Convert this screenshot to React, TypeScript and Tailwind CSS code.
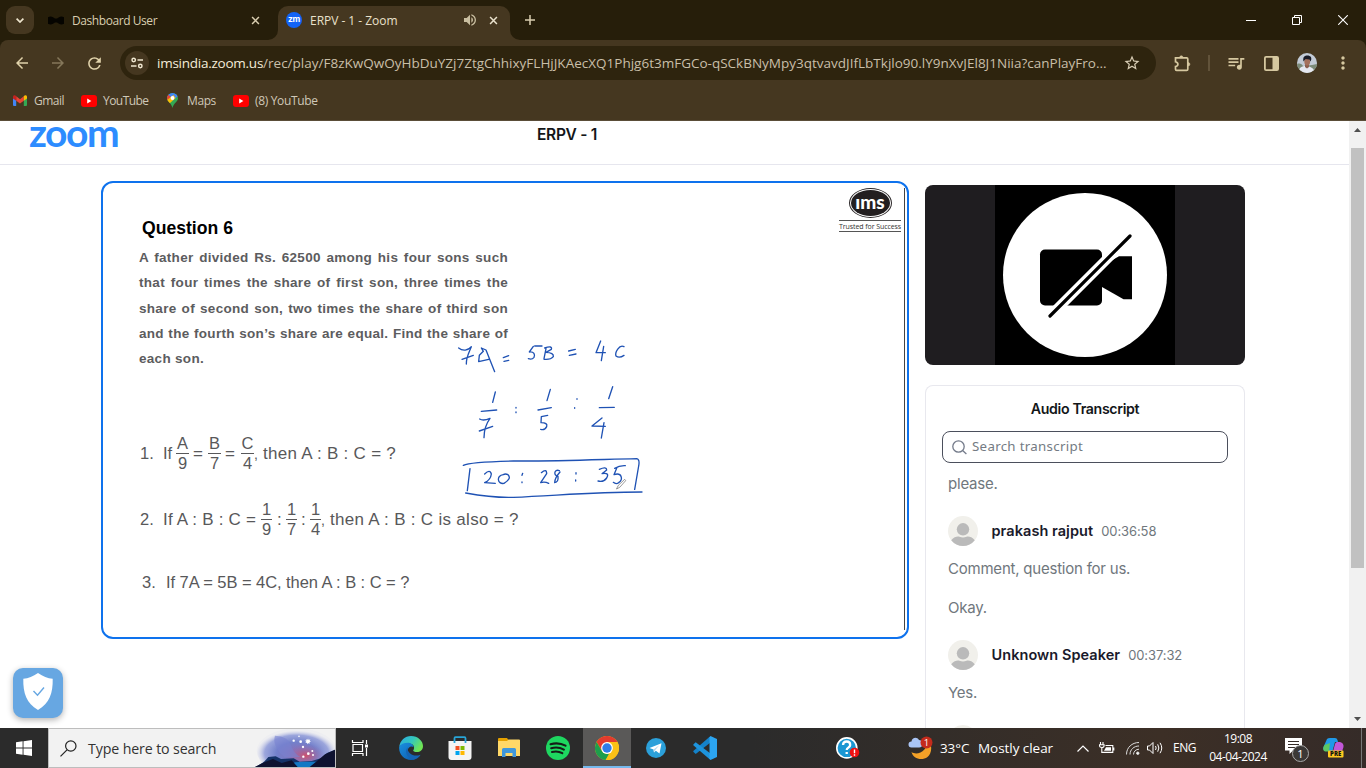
import React from "react";
import type { ReactNode } from "react";
import {
  MdArrowBack,
  MdArrowForward,
  MdMoreVert,
  MdQueueMusic,
  MdRefresh,
  MdStarBorder,
  MdVolumeUp,
} from "react-icons/md";

const segoe = "font-['Open_Sans','Noto_Sans',sans-serif]";
const arial = "font-['Liberation_Sans',Arial,sans-serif]";

function CloseIcon({ className }: { className: string }) {
  return (
    <svg viewBox="0 0 10 10" className={className} fill="none" stroke="currentColor" strokeWidth="1.7">
      <path d="M1.2 1.2 8.8 8.8M8.8 1.2 1.2 8.8" />
    </svg>
  );
}

function YouTubeIcon() {
  return (
    <svg viewBox="0 0 16 12" className="h-3 w-4 shrink-0">
      <rect width="16" height="12" rx="3" fill="#ff0000" />
      <path d="M6.200 3.600v4.800L10.400 6z" fill="#fff" />
    </svg>
  );
}

function TabStrip() {
  return (
    <div className={`flex h-10 items-start bg-[#261e0a] ${segoe}`}>
      <div className="mt-1.5 ml-1.5 flex h-7 w-7 shrink-0 items-center justify-center rounded-[9px] bg-[#453720]">
        <svg viewBox="0 0 8 5" className="h-[5px] w-2" fill="none" stroke="#efe6cf" strokeWidth="1.7">
          <path d="M.6.6 4 4 7.4.6" />
        </svg>
      </div>
      <div className="flex h-10 w-[244px] shrink-0 items-center pl-[14px] text-[#d9ceb0]">
        <svg viewBox="0 0 16 9" className="h-[9px] w-4 shrink-0" fill="#050400">
          <path d="M0 1.200C1.600.2 3.600.2 5 1.200L7 2.400h2l2-1.200C12.400.2 14.400.2 16 1.200v6.600c-1.600 1-3.600.9-5 0L9 6.600H7L5 7.800c-1.400 1-3.400 1-5 0z" />
        </svg>
        <span className="mt-px ml-2 grow whitespace-nowrap text-[12px] tracking-[-0.430px]">Dashboard User</span>
        <CloseIcon className="mr-[18px] size-[9px]" />
      </div>
      <div className="relative mt-1.5 flex h-[34px] w-[232px] shrink-0 items-start rounded-t-[10px] bg-[#453720] text-[#e9e1cc]">
        <svg viewBox="0 0 10 10" className="absolute bottom-0 -left-2.5 size-2.5" fill="#453720">
          <path d="M10 0v10H0A10 10 0 0 0 10 0z" />
        </svg>
        <svg viewBox="0 0 10 10" className="absolute -right-2.5 bottom-0 size-2.5" fill="#453720">
          <path d="M0 0v10h10A10 10 0 0 1 0 0z" />
        </svg>
        <div className="flex h-7 w-full items-center pl-2">
          <div className="flex size-4 shrink-0 items-center justify-center rounded-full bg-[#1263f5]">
            <span className="mb-[2px] font-['Inter',sans-serif] text-[8.5px] leading-none font-bold tracking-[-0.3px] text-white">zm</span>
          </div>
          <span className="mt-px ml-2 grow whitespace-nowrap text-[12px] tracking-[-0.030px]">ERPV - 1 - Zoom</span>
          <MdVolumeUp className="mr-[11px] size-4 text-[#c9bea0]" />
          <CloseIcon className="mr-[12px] size-[9px]" />
        </div>
      </div>
      <svg viewBox="0 0 10 10" className="mt-[15px] ml-[15px] size-2.5" stroke="#d9ceb0" strokeWidth="1.5">
        <path d="M5 0v10M0 5h10" />
      </svg>
      <div className="mt-[15px] mr-[18px] ml-auto flex items-center gap-[36px]">
        <svg viewBox="0 0 10 10" className="size-2.5" stroke="#fff">
          <path d="M0 5.500h10" />
        </svg>
        <svg viewBox="0 0 10 10" className="size-2.5" fill="none" stroke="#fff">
          <path d="M.5 2.500h7v7h-7zM2.500 2.500v-2h7v7h-2" />
        </svg>
        <svg viewBox="0 0 10 10" className="size-2.5" fill="none" stroke="#fff" strokeWidth="1.1">
          <path d="M.2.2 9.800 9.800M9.800.2.2 9.800" />
        </svg>
      </div>
    </div>
  );
}

function Toolbar() {
  return (
    <div className={`flex h-[46px] items-center bg-[#453720] text-[#d6c8a0] ${segoe}`}>
      <MdArrowBack className="ml-[13px] size-[18px] shrink-0 text-[#e0d2aa]" />
      <MdArrowForward className="ml-[18px] size-[18px] shrink-0 text-[#85775a]" />
      <MdRefresh className="ml-[18px] size-[19px] shrink-0 text-[#e0d2aa]" />
      <div className="ml-4 flex h-[34px] w-[1036px] shrink-0 items-center rounded-full bg-[#2e240e] pl-[5px]">
        <div className="flex size-6 shrink-0 items-center justify-center rounded-full bg-[#453720]">
          <svg viewBox="0 0 12 12" className="size-3" fill="none" stroke="#efe7d0" strokeWidth="1.5">
            <circle cx="2.700" cy="3" r="1.700" />
            <path d="M6.500 3H12M0 9h5.500" />
            <circle cx="9.300" cy="9" r="1.700" />
          </svg>
        </div>
        <span className="ml-2 w-[966px] shrink-0 whitespace-nowrap text-[13.500px] tracking-[0.003px] text-[#c9bfa9]">
          <span className="tracking-[-0.250px] text-[#f4ecd9]">imsindia.zoom.us</span>
          /rec/play/F8zKwQwOyHbDuYZj7ZtgChhixyFLHjJKAecXQ1Phjg6t3mFGCo-qSCkBNyMpy3qtvavdJIfLbTkjlo90.lY9nXvJEl8J1Niia?canPlayFro...
        </span>
        <MdStarBorder className="size-[18px] shrink-0 text-[#d8cdb4]" />
      </div>
      <svg viewBox="0 0 17 17" className="ml-[18px] size-[17px] shrink-0" fill="none" stroke="currentColor" strokeWidth="1.700">
        <path d="M1.500 2.900h11.200q1.100 0 1.100 1.100v10.300q0 1.100-1.100 1.100H2.600q-1.100 0-1.100-1.100V11.500c1.600-.3 2.400-1 2.400-2.300S3 7.200 1.500 6.800z" />
        <path d="M5.600 2.700a1.700 1.900 0 0 1 3.400 0zM14 7.500a1.900 1.700 0 0 1 0 3.400z" fill="currentColor" strokeWidth=".6" />
      </svg>
      <div className="ml-[17px] h-4 w-[2px] shrink-0 bg-[#62533a]" />
      <MdQueueMusic className="ml-[16px] size-[20px] shrink-0" />
      <svg viewBox="0 0 15 15" className="ml-[18px] size-[15px] shrink-0">
        <rect x=".9" y=".9" width="13.200" height="13.200" rx="1.200" fill="none" stroke="currentColor" strokeWidth="1.800" />
        <path d="M8.500 1H14v13H8.500z" fill="currentColor" />
      </svg>
      <svg viewBox="0 0 20 20" className="ml-[18px] size-5 shrink-0">
        <clipPath id="avatar">
          <circle cx="10" cy="10" r="10" />
        </clipPath>
        <g clipPath="url(#avatar)">
          <rect width="20" height="20" fill="#c3cbd6" />
          <path d="M0 11c3-1 5 0 6 2l9-1 5-1v9H0z" fill="#7c8b78" />
          <path d="M1 20c1-6 4-7 8-7s8 2 9 7z" fill="#e6e8f0" />
          <path d="M8 10h4v4l-2 1.500L8 14z" fill="#8c5e4d" />
          <ellipse cx="10.200" cy="8.500" rx="2.900" ry="4" fill="#a4705c" />
          <path d="M6.500 8.500c-1-4.500 1.200-6 4-6s5 2 3.200 6L12.500 6.500 8.500 6z" fill="#191b26" />
        </g>
      </svg>
      <MdMoreVert className="ml-[16px] size-5 shrink-0" />
    </div>
  );
}

function Bookmarks() {
  return (
    <div className={`flex h-[35px] items-center border-b border-[#5a4d38] bg-[#453720] pb-[5px] pl-[13px] text-[12px] text-[#d0c8b8] ${segoe}`}>
      <svg viewBox="0 0 14 11" className="h-[11px] w-3.5">
        <path d="M0 2v8q0 1 1 1h2.200V4.500z" fill="#4285f4" />
        <path d="M14 2v8q0 1-1 1h-2.200V4.500z" fill="#34a853" />
        <path d="M3.200 1.300v4.500L7 8.600l3.800-2.800V1.300L7 4.200z" fill="#ea4335" />
        <path d="M0 1.700C0 .2 1.700-.4 3.200.9v4.900L0 3.500z" fill="#c5221f" />
        <path d="M14 1.700C14 .2 12.300-.4 10.800.9v4.900L14 3.500z" fill="#fbbc04" />
      </svg>
      <span className="ml-[7px] w-[47px] tracking-[-0.5px]">Gmail</span>
      <YouTubeIcon />
      <span className="ml-[6px] w-[64px] tracking-[-0.550px]">YouTube</span>
      <svg viewBox="0 0 11 15" className="h-[15px] w-[11px]">
        <clipPath id="pin">
          <path d="M5.500 0A5.500 5.200 0 0 1 11 5.200c0 3.500-4.300 4.300-5.500 9.800C4.300 9.500 0 8.700 0 5.200A5.500 5.200 0 0 1 5.500 0z" />
        </clipPath>
        <g clipPath="url(#pin)">
          <rect width="11" height="15" fill="#34a853" />
          <path d="M0 0h11v3L5.500 8 0 3z" fill="#4285f4" />
          <path d="M-1 8V0l5 4z" fill="#ea4335" />
          <path d="M0 9V7l6.500-5 2 3L2 11z" fill="#fbbc04" />
        </g>
        <circle cx="5.500" cy="5" r="1.900" fill="#fff" />
      </svg>
      <span className="ml-[9px] w-[46px] tracking-[-0.4px]">Maps</span>
      <YouTubeIcon />
      <span className="ml-[6px] tracking-[-0.350px]">(8) YouTube</span>
    </div>
  );
}

function Fraction({ top, bottom, width }: { top: string; bottom: string; width: string }) {
  return (
    <div className={`flex shrink-0 flex-col items-center text-[16.500px] leading-[18px] ${width}`}>
      <span className="h-[19px]">{top}</span>
      <span className="h-px w-full bg-[#58585a]" />
      <span className="h-[18px]">{bottom}</span>
    </div>
  );
}

function Handwriting() {
  return (
    <svg
      viewBox="0 0 720 570"
      className="absolute top-[137px] left-[337px] h-[190px] w-[240px]"
      fill="none"
      stroke="#1f52b4"
      strokeWidth="4"
      strokeLinecap="round"
      strokeLinejoin="round"
    >
      <path d="M56 84C68 94 84 92 94 80C88 96 78 112 79 132M66 118L100 106M124 84L130 94L118 106L116 125L146 118M124 84L138 90L164 155M190 113L206 107M192 124L206 121" />
      <path d="M284 78H306M280 79L268 96C282 94 286 104 282 112Q276 120 265 116M318 86L312 116M314 84Q338 76 334 88L318 97Q342 98 340 110Q332 120 312 118M386 93L406 88M388 106L408 102" />
      <path d="M482 63L468 98H496M491 79L484 122M552 80C538 72 524 98 528 108Q538 116 552 106" />
      <path d="M166 216L158 247M124 274L170 270M119 297Q130 304 150 295Q132 320 132 353M118 333L158 319" />
      <path d="M228 262v2M228 276v2M331 208L321 242M294 270L334 263M304 290L323 286M304 290L303 308Q324 308 320 320Q314 332 302 328" />
      <path d="M411 236v2M404 263v2M518 200L506 236M478 263L523 262M486 294L456 318L496 319M492 308L484 354" />
      <path d="M70 436Q90 426 220 423C360 424 490 418 590 416Q600 418 596 438L584 508M90 446L82 512M77 519Q160 534 220 532C360 526 460 516 606 516" />
      <path d="M134 462Q150 446 154 462Q152 480 134 488L166 490M190 464C168 466 172 494 192 490Q216 476 204 464Q196 460 190 464M248 460L246 466M246 486v2" />
      <path d="M304 458Q320 444 320 461L302 488Q314 484 326 490M358 452C342 446 340 466 354 469Q356 486 344 488Q344 474 360 456M408 458v4M407 480v3" />
      <path d="M478 448Q500 438 500 450L486 461Q510 456 500 474Q490 488 474 483M524 445Q538 436 556 437M530 445L522 464C546 456 550 478 536 488Q528 494 520 487" />
      <path d="M530 506L535 496L554 478L557 482L540 501Z" stroke="#666" strokeWidth="2" fill="#fff" />
    </svg>
  );
}

function Slide() {
  return (
    <div className={`relative mt-4 ml-[101px] flex h-[458px] w-[808px] shrink-0 justify-between rounded-xl border-2 border-[#0e72ed] bg-white ${arial}`}>
      <div className="flex w-[500px] flex-col pl-9 text-[#58585a]">
        <h2 className="mt-[35px] ml-[3px] text-[17.600px] leading-5 font-bold text-black">Question 6</h2>
        <div className="mt-[7px] w-[369px] text-[13.500px] leading-[25.300px] font-bold tracking-[0.300px] text-[#5c5c5e]">
          <p className="[text-align-last:justify] whitespace-nowrap">A father divided Rs. 62500 among his four sons such</p>
          <p className="[text-align-last:justify] whitespace-nowrap">that four times the share of first son, three times the</p>
          <p className="[text-align-last:justify] whitespace-nowrap">share of second son, two times the share of third son</p>
          <p className="[text-align-last:justify] whitespace-nowrap">and the fourth son’s share are equal. Find the share of</p>
          <p>each son.</p>
        </div>
        <div className="mt-[63px] ml-px flex h-[38px] items-center whitespace-nowrap text-[17px]">
          <span className="w-[23px] text-[16.500px]">1.</span>
          <span className="w-[13px] text-[16.500px]">If</span>
          <Fraction top="A" bottom="9" width="w-[13px]" />
          <span className="w-[19px] pl-[4px]">=</span>
          <Fraction top="B" bottom="7" width="w-[13px]" />
          <span className="w-[20px] pl-[4px]">=</span>
          <Fraction top="C" bottom="4" width="w-[13px]" />
          <span className="mt-[3px] w-[9px] text-[14px]">,</span>
          <span className="tracking-[0.280px]">then A : B : C = ?</span>
        </div>
        <div className="mt-[28px] ml-px flex h-[38px] items-center whitespace-nowrap text-[17px]">
          <span className="w-[23px] text-[16.500px]">2.</span>
          <span className="w-[98px] tracking-[0.200px]">If A : B : C =</span>
          <Fraction top="1" bottom="9" width="w-[11px]" />
          <span className="w-[14px] pl-[5px]">:</span>
          <Fraction top="1" bottom="7" width="w-[11px]" />
          <span className="w-[13px] pl-[4px]">:</span>
          <Fraction top="1" bottom="4" width="w-[11px]" />
          <span className="mt-[3px] w-[9px] text-[14px]">,</span>
          <span className="tracking-[0.300px]">then A : B : C is also = ?</span>
        </div>
        <div className="mt-[32px] ml-[3px] flex whitespace-nowrap text-[16.500px] leading-6">
          <span className="w-[24px]">3.</span>
          <span className="tracking-[-0.060px]">If 7A = 5B = 4C, then A : B : C = ?</span>
        </div>
      </div>
      <div className="mt-[5px] mr-[2px] flex h-[442px] w-[66px] border-r border-[#444]">
        <div className="flex w-[62px] flex-col items-center">
          <div className="flex h-[30px] w-[43px] items-center justify-center rounded-[50%] border border-[#2b2728] p-px">
            <div className="flex h-full w-full items-center justify-center rounded-[50%] bg-[#231f20]">
              <span className="mb-[3px] font-['Lato',sans-serif] text-[19px] leading-none font-black text-white">ıms</span>
            </div>
          </div>
          <div className="mt-[2px] flex h-[12px] w-full items-center justify-center border-y border-[#555]">
            <span className="font-['Open_Sans',sans-serif] text-[7px] leading-none tracking-[-0.070px] whitespace-nowrap text-[#333]">Trusted for Success</span>
          </div>
        </div>
      </div>
      <Handwriting />
    </div>
  );
}

function Avatar() {
  return (
    <svg viewBox="0 0 30 30" className="size-[30px] shrink-0">
      <circle cx="15" cy="15" r="15" fill="#f1f0eb" />
      <circle cx="15" cy="13.300" r="6.200" fill="#bababa" />
      <path d="M3.200 24.200C6.200 20.300 10 20 11.500 20.700c2.200 1 4.800 1 7 0 1.500-.7 5.300-.4 8.300 3.500A15 15 0 0 1 3.200 24.200z" fill="#bababa" />
    </svg>
  );
}

function Speaker({ name, time }: { name: string; time: string }) {
  return (
    <div className="mt-[22px] flex items-center">
      <Avatar />
      <b className="ml-[13.500px] text-[14.500px] font-semibold tracking-[0.060px] text-[#1a1a2b]">{name}</b>
      <span className="ml-2 text-[13px] tracking-[-0.100px]">{time}</span>
    </div>
  );
}

function Sidebar() {
  return (
    <div className="ml-4 flex w-80 shrink-0 flex-col pt-5 font-['Inter',sans-serif]">
      <div className="flex h-[180px] shrink-0 justify-center overflow-hidden rounded-lg bg-[#1f1d20]">
        <div className="flex w-[180px] items-center justify-center bg-black">
          <svg viewBox="0 0 164 164" className="size-[164px]">
            <circle cx="82" cy="82" r="82" fill="#fff" />
            <rect x="37" y="56.500" width="62" height="56" rx="5" fill="#000" />
            <path d="M99 73 116 63.300h13v43h-8.500L99 94z" fill="#000" />
            <path d="M42 128 132 38" stroke="#fff" strokeWidth="10" />
            <path d="M47 123 127 43" stroke="#000" strokeWidth="3.200" strokeLinecap="round" />
          </svg>
        </div>
      </div>
      <div className="mt-5 flex grow flex-col rounded-t-lg border border-b-0 border-[#e8e8ee] px-4">
        <h3 className="mt-[13px] text-center text-[14.200px] leading-5 font-semibold tracking-[-0.350px] text-[#131619]">Audio Transcript</h3>
        <div className="mt-3 flex h-8 shrink-0 items-center rounded-lg border border-[#4b4f5c] pl-[9px]">
          <svg viewBox="0 0 15 15" className="size-[15px]" fill="none" stroke="#747b8a" strokeWidth="1.300">
            <circle cx="6.500" cy="6.500" r="5.700" />
            <path d="m10.600 10.600 3.800 3.400" />
          </svg>
          <span className="ml-[5px] font-['Noto_Sans',sans-serif] text-[13.300px] tracking-[0.300px] text-[#747b83]">Search transcript</span>
        </div>
        <div className="ml-[6px] flex flex-col text-[15px] leading-5 tracking-[-0.220px] text-[#70777d]">
          <p className="mt-[11px]">please.</p>
          <Speaker name="prakash rajput" time="00:36:58" />
          <p className="mt-[13px]">Comment, question for us.</p>
          <p className="mt-[19px]">Okay.</p>
          <Speaker name="Unknown Speaker" time="00:37:32" />
          <p className="mt-[13px]">Yes.</p>
          <div className="mt-[22px]">
            <Avatar />
          </div>
        </div>
      </div>
    </div>
  );
}

function Page() {
  return (
    <div className="flex h-[607px] shrink-0 bg-white">
      <div className="relative flex w-[1349px] flex-col">
        <div className="flex h-11 shrink-0 items-start border-b border-[#e6e6ee] font-['Inter',sans-serif]">
          <span className="mt-[-7px] ml-[29px] h-9 w-[508px] font-['Lato',sans-serif] text-[39px] leading-9 font-bold tracking-[-1.500px] text-[#2d8cff]">zoom</span>
          <span className="mt-[4px] text-[15.500px] leading-5 font-semibold tracking-[-0.300px] text-[#131619]">ERPV - 1</span>
        </div>
        <div className="flex h-[563px] items-stretch overflow-hidden">
          <Slide />
          <Sidebar />
        </div>
        <div className="absolute top-[547px] left-[13px] flex size-[50px] justify-center rounded-[10px] bg-[#67a7e2] pt-[5px] shadow-[0_2px_6px_rgba(0,0,0,0.3)]">
          <svg viewBox="0 0 30 37" className="h-[37px] w-[30px]">
            <path d="M15 0C20 3.600 24.500 5.300 29.700 5.800 30 20 26.500 30.500 15 37 3.500 30.500 0 20 .3 5.800 5.500 5.300 10 3.600 15 0z" fill="#fff" />
            <path d="m10.500 18 4 4.300 6.500-7.800" fill="none" stroke="#67a7e2" strokeWidth="1.400" />
          </svg>
        </div>
      </div>
      <div className="flex w-[17px] flex-col items-center justify-between bg-[#f1f1f1] pt-[7px] pb-[7px]">
        <svg viewBox="0 0 7 4" className="h-1 w-[7px]">
          <path d="M3.500 0 7 4H0z" fill="#505050" />
        </svg>
        <div className="mt-4 mb-auto h-[420px] w-[13px] bg-[#c1c1c1]" />
        <svg viewBox="0 0 7 4" className="h-1 w-[7px]">
          <path d="M3.500 4 0 0h7z" fill="#505050" />
        </svg>
      </div>
    </div>
  );
}

function TaskIcon({ children, active = false }: { children: ReactNode; active?: boolean }) {
  return (
    <div className={`flex h-10 shrink-0 items-center justify-center ${active ? "ml-px w-12 border-b-2 border-[#76b9ed] bg-[#5a5958] pt-[2px]" : "w-[49px]"}`}>
      {children}
    </div>
  );
}

function SearchArt() {
  return (
    <svg viewBox="0 0 240 114" className="h-[38px] w-20 shrink-0">
      <defs>
        <radialGradient id="sky" cx=".5" cy=".55" r=".5">
          <stop offset="0" stopColor="#8d6fb5" />
          <stop offset=".5" stopColor="#7280cb" />
          <stop offset=".8" stopColor="#8c98d8" stopOpacity=".85" />
          <stop offset="1" stopColor="#c5c9e8" stopOpacity=".1" />
        </radialGradient>
        <radialGradient id="glow">
          <stop offset="0" stopColor="#d0506a" />
          <stop offset="1" stopColor="#8d6fb5" stopOpacity="0" />
        </radialGradient>
      </defs>
      <ellipse cx="125" cy="66" rx="120" ry="68" fill="url(#sky)" />
      <ellipse cx="152" cy="80" rx="58" ry="36" fill="url(#glow)" />
      <path d="M60 20Q100 22 108 48T136 84L88 84Q50 50 60 20z" fill="#7882d1" opacity=".6" />
      <path d="M0 114C18 104 28 100 40 84L62 82 78 90 116 88 134 98 170 96 202 86 216 72 240 62V114z" fill="#153268" />
      <path d="M90 114 120 100 150 98 174 98 190 98 172 114z" fill="#1378c4" />
      <path d="M0 114 28 100 54 90 80 102 110 94 128 114zM164 114 186 96 210 76 240 62V114z" fill="#0e1230" />
      <g fill="#fff">
        <circle cx="132" cy="22" r="2.500" />
        <circle cx="116" cy="35" r="3.500" />
        <circle cx="137" cy="38" r="4" />
        <path d="m159 28 2 5 5-2-2 5 4 2-5 2 2 4-4-2-3 4-2-5-5 1 3-4-4-3 5-1-1-4 4 2z" />
        <circle cx="144" cy="54" r="3.500" />
        <circle cx="172" cy="66" r="3" />
        <circle cx="160" cy="74" r="4" />
        <circle cx="174" cy="78" r="3" />
        <circle cx="145" cy="83" r="3.500" />
      </g>
    </svg>
  );
}

function Taskbar() {
  return (
    <div className={`flex h-10 shrink-0 items-center bg-linear-to-r from-[#2b2b2b] from-55% via-[#3c2f26] via-85% to-[#352b28] text-white ${segoe}`}>
      <div className="flex w-12 shrink-0 justify-center">
        <svg viewBox="0 0 16 16" className="size-4" fill="#fff">
          <path d="M0 2.200 6.600 1.300V7.600H0zM7.500 1.200 16 0V7.600H7.500zM0 8.400H6.600V14.700L0 13.800zM7.500 8.400H16V16L7.500 14.800z" />
        </svg>
      </div>
      <div className="flex h-10 w-72 shrink-0 items-center border border-[#bdbdbd] bg-[#f2f2f2] pl-[11px]">
        <svg viewBox="0 0 17 17" className="size-[17px]" fill="none" stroke="#222" strokeWidth="1.200">
          <circle cx="10.800" cy="6" r="5.200" />
          <path d="m7 9.800-6.500 6.500" />
        </svg>
        <span className="mt-px ml-[11px] grow whitespace-nowrap text-[14.200px] tracking-[-0.120px] text-[#333]">Type here to search</span>
        <SearchArt />
      </div>
      <TaskIcon>
        <svg viewBox="0 0 18 18" className="mr-[2px] size-[18px]" fill="none" stroke="#fff" strokeWidth="1.200">
          <path d="M1.500 1v2.500h10.500V1M1.500 17v-2.500h10.500V17M2 5.500h9.500v7H2zM15.500 1v4M15.500 9v8" />
          <path d="M14 5.500h3v3h-3z" fill="#fff" stroke="none" />
        </svg>
      </TaskIcon>
      <div className="w-px shrink-0" />
      <TaskIcon>
        <svg viewBox="0 0 24 24" className="size-6">
          <defs>
            <linearGradient id="edgeTop" x1="0" y1="0" x2="1" y2=".5">
              <stop offset="0" stopColor="#2aa9e8" />
              <stop offset=".55" stopColor="#34c7bc" />
              <stop offset="1" stopColor="#6fe454" />
            </linearGradient>
            <linearGradient id="edgeLow" x1="0" y1="0" x2="1" y2="1">
              <stop offset="0" stopColor="#1a8fe0" />
              <stop offset="1" stopColor="#0c58aa" />
            </linearGradient>
          </defs>
          <path d="M.2 11C1 4.500 6 0 12 0c7 0 12 5 12 10 0 4-3 6-6 6-2.500 0-4-.7-3.800-1.500 2-2.500.8-7-4.200-7C5.500 7.500 1 9.500.2 11z" fill="url(#edgeTop)" />
          <path d="M.2 11C1.500 8 5 6.700 8.500 6.700c3.500 0 6 2 6 4.600-2-2-6 0-6 4 0 5 6 7.500 12.500 4C18.500 22.500 15.500 24 12 24 5 24-.5 18 .2 11z" fill="url(#edgeLow)" />
          <path d="M8.600 11.500C5 15 8 22.500 14 23.700 17 23.400 20 21.500 21.600 18.700 15 21.300 8 17.500 8.600 11.500z" fill="#1464b4" />
        </svg>
      </TaskIcon>
      <TaskIcon>
        <svg viewBox="0 0 24 24" className="size-6">
          <path d="M.5 5h23v16q0 3-3 3h-17q-3 0-3-3z" fill="#f4f4f4" />
          <path d="M6.500 7V2.200q0-1 1-1h9q1 0 1 1V7" fill="none" stroke="#28a5d8" strokeWidth="1.800" />
          <path d="M7.500 10h4v4h-4z" fill="#f25022" />
          <path d="M12.500 10h4v4h-4z" fill="#7fba00" />
          <path d="M7.500 15h4v4h-4z" fill="#00a4ef" />
          <path d="M12.500 15h4v4h-4z" fill="#ffb900" />
        </svg>
      </TaskIcon>
      <TaskIcon>
        <svg viewBox="0 0 22 20" className="h-5 w-[22px]">
          <path d="M0 1q0-1 1-1h8l1.500 2H22v5H0z" fill="#e5a100" />
          <path d="M0 3h9l1.500-1.500H21q1 0 1 1V18H0z" fill="#ffd867" />
          <path d="M4 19v-7.500q0-1.500 1.500-1.500h11q1.500 0 1.500 1.500V19h-3.500v-4h-7v4z" fill="#3f97db" />
        </svg>
      </TaskIcon>
      <TaskIcon>
        <svg viewBox="0 0 24 24" className="size-6">
          <circle cx="12" cy="12" r="12" fill="#1ed760" />
          <path d="M4.500 8.200c5-1.400 10.500-1 15 1.500M5.200 12.200c4.300-1.200 9-.7 12.700 1.400M6 16c3.600-.9 7.200-.6 10.300 1.200" fill="none" stroke="#151c17" strokeWidth="2.100" strokeLinecap="round" />
        </svg>
      </TaskIcon>
      <TaskIcon active>
        <svg viewBox="0 0 24 24" className="size-6">
          <circle cx="12" cy="12" r="12" fill="#fbc116" />
          <path d="M1.600 6A12 12 0 0 1 22.400 6H12L7 15z" fill="#e33b2e" />
          <path d="M1.600 6 6.900 15A6 6 0 0 0 14 17.700L10.600 24A12 12 0 0 1 1.600 6z" fill="#1e9e4c" />
          <path d="M12 6h10.400A12 12 0 0 1 10.600 24L17.200 15z" fill="#fbc116" />
          <circle cx="12" cy="12" r="5.900" fill="#fff" />
          <circle cx="12" cy="12" r="4.700" fill="#2f7de9" />
        </svg>
      </TaskIcon>
      <TaskIcon>
        <svg viewBox="0 0 20 20" className="size-5">
          <circle cx="10" cy="10" r="10" fill="#2ba0da" />
          <path d="M3.500 10 15.500 5.200 13.500 15.500 9.800 12.800 8 14.600 7.500 11.500z" fill="#fff" />
          <path d="m7.500 11.500 5.800-4.200-4.400 5.100L8 14.600z" fill="#b5d8ec" />
        </svg>
      </TaskIcon>
      <TaskIcon>
        <svg viewBox="0 0 24 24" className="size-6">
          <path d="M17.500 0v6.600L2.700 18 .3 15.800V15z" fill="#1482ca" />
          <path d="M.3 8.500 2.700 6.300 17.500 17.500V24L.3 9.300z" fill="#1d93dc" />
          <path d="M17.500 0 24 3v18l-6.500 3-1-1.500V1.500z" fill="#2ca5f1" />
        </svg>
      </TaskIcon>
      <svg viewBox="0 0 24 22" className="ml-[107px] h-[22px] w-6 shrink-0">
        <circle cx="10.800" cy="10.900" r="10" fill="#1b97d3" stroke="#fff" strokeWidth="1.600" />
        <path d="M7 8q.2-3.500 3.700-3.500T14.200 8q0 1.500-2 2.700-1.500.8-1.500 2.300M10.700 15v2" fill="none" stroke="#fff" strokeWidth="2.300" />
        <circle cx="18.500" cy="15.500" r="4.800" fill="#ee1111" />
        <path d="M18.500 12.500v3.700M18.500 17.300v1.400" stroke="#fff" strokeWidth="1.400" />
      </svg>
      <svg viewBox="0 0 25 24" className="ml-[48px] h-6 w-[25px] shrink-0">
        <path d="M20 2C24 11 22 17 18.500 20 13 24 4 22 2.500 15 9 19.500 19 13 20 2z" fill="#f4a127" transform="translate(1 1)" />
        <path d="M3.500 11.500a3 3 0 0 1 0-6C4 1.500 9 .5 11 4c3 0 4 3 3.300 5.500-.6 1.300-1.500 2-3 2z" fill="#aac5f5" />
        <circle cx="18.500" cy="6.500" r="6" fill="#c42b1c" />
        <text x="18.500" y="9.800" fontSize="9.500" textAnchor="middle" fill="#fff">1</text>
      </svg>
      <span className="ml-[7px] w-[38px] shrink-0 whitespace-nowrap text-[13.500px] tracking-[-0.100px]">33°C</span>
      <span className="w-[99px] shrink-0 whitespace-nowrap text-[13.500px] tracking-[-0.050px]">Mostly clear</span>
      <svg viewBox="0 0 12 7" className="h-[7px] w-3 shrink-0" fill="none" stroke="#fff" strokeWidth="1.200">
        <path d="M.5 6.500 6 1l5.500 5.500" />
      </svg>
      <svg viewBox="0 0 16 12" className="ml-[10px] h-3 w-4 shrink-0" fill="none" stroke="#fff" strokeWidth="1.100">
        <path d="M1.500 0v2.500M4 0v2.500M.5 2.700h4.600v1Q5 5.500 2.800 5.500.5 5.500.5 3.700zM2.800 5.500v4.900h11V3.500H6.500M14.800 5.500v3" />
        <path d="M7 5.200h5v3.500H5z" fill="#fff" stroke="none" />
      </svg>
      <svg viewBox="0 0 14 13" className="ml-[11px] h-[13px] w-3.5 shrink-0" fill="none" stroke="#ddd" strokeWidth="1">
        <path d="M.5 12.500C.5 5.500 6 .5 13 .5M4 12.500C4 7.500 8 4 13 4M7.500 12.500C7.500 9.500 10 7.200 13 7.200" />
        <circle cx="11.800" cy="11.200" r="1.200" fill="#fff" />
      </svg>
      <svg viewBox="0 0 17 14" className="ml-[7px] h-3.5 w-[17px] shrink-0" fill="none" stroke="#fff" strokeWidth="1">
        <path d="M.5 5h2L6 1.500v11L2.500 9h-2zM8.500 5Q9.800 7 8.500 9M10.700 3.300Q13 7 10.700 10.700M13 1.800Q16.500 7 13 12.200" />
      </svg>
      <span className="ml-[9px] w-[32px] shrink-0 text-[12px] tracking-[-0.450px]">ENG</span>
      <div className="flex w-[66px] shrink-0 flex-col items-center whitespace-nowrap text-[12px] leading-[18px] tracking-[-0.500px]">
        <span>19:08</span>
        <span>04-04-2024</span>
      </div>
      <div className="relative ml-[14px] h-5 w-6 shrink-0">
        <svg viewBox="0 0 17 16" className="h-4 w-[17px]">
          <path d="M0 0h17v12.500H8L4.500 16v-3.500H0z" fill="#fff" />
          <path d="M3 3.500h11M3 6.500h11M3 9.500h7" stroke="#352c27" strokeWidth="1.100" />
        </svg>
        <div className="absolute top-[7px] left-[7px] flex size-[17px] items-center justify-center rounded-full border border-[#aaa] bg-[#3b3836] text-[11px] leading-none">1</div>
      </div>
      <svg viewBox="0 0 21 20" className="ml-[14px] h-5 w-[21px] shrink-0">
        <path d="M4 1q1-1 3-1h5q2 0 2.500 2l.5 2H12L9.500 13H2Q-.5 12 .5 9z" fill="#2099e8" />
        <path d="M1.500 7 7 5 6 13.500H2Q-.5 12.500.5 9z" fill="#5bc763" />
        <path d="M12 6q.5-2 2.500-2H17q4 1 3.500 5L19 13.500H10z" fill="#c157d8" />
        <rect x="5" y="12.500" width="15.500" height="7" rx="1" fill="#ffc91f" />
        <text x="12.700" y="18.300" fontSize="6" fontWeight="800" textAnchor="middle" fill="#111">PRE</text>
      </svg>
      <div className="mr-1 ml-auto h-10 w-px bg-[#777]" />
    </div>
  );
}

export default function App() {
  return (
    <div className="flex h-[768px] w-[1366px] flex-col overflow-hidden bg-[#261e0a]">
      <TabStrip />
      <div className="shrink-0 overflow-hidden rounded-t-[8px]">
        <Toolbar />
        <Bookmarks />
      </div>
      <Page />
      <Taskbar />
    </div>
  );
}
